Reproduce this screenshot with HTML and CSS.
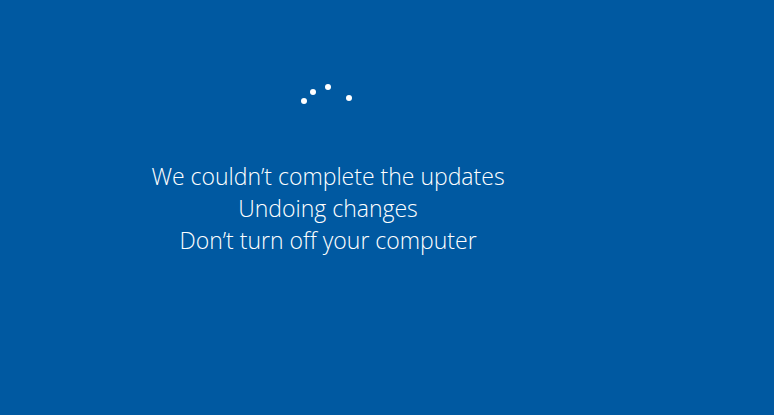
FILE: index.html
```html
<!DOCTYPE html>
<html lang="en">
<head>
  <meta charset="UTF-8">
  <title>Updates</title>
  <link rel="stylesheet" href="styles.css">
</head>
<body>
  <div class="screen">
    <div class="spinner">
      <svg width="60" height="30" viewBox="0 0 60 30">
        <circle cx="6" cy="21" r="3" fill="#fff"/>
        <circle cx="15" cy="12" r="3" fill="#fff"/>
        <circle cx="30" cy="7" r="3" fill="#fff"/>
        <circle cx="51" cy="18" r="3" fill="#fff"/>
      </svg>
    </div>
    <div class="message">
      <p>We couldn’t complete the updates</p>
      <p>Undoing changes</p>
      <p>Don’t turn off your computer</p>
    </div>
  </div>
</body>
</html>
```

FILE: styles.css
```css
html, body {
  margin: 0;
  height: 100%;
}

body {
  background-color: #0059a1;
  color: #fff;
  font-family: "Open Sans", "Noto Sans", sans-serif;
  overflow: hidden;
}

.screen {
  width: 656px;
  padding-top: 80px;
  text-align: center;
}

.spinner {
  height: 30px;
}

.spinner svg {
  display: block;
  margin: 0 auto;
}

.message {
  margin-top: 50px;
  font-size: 23px;
  font-weight: 300;
  line-height: 32px;
}

.message p {
  margin: 0;
}
```
